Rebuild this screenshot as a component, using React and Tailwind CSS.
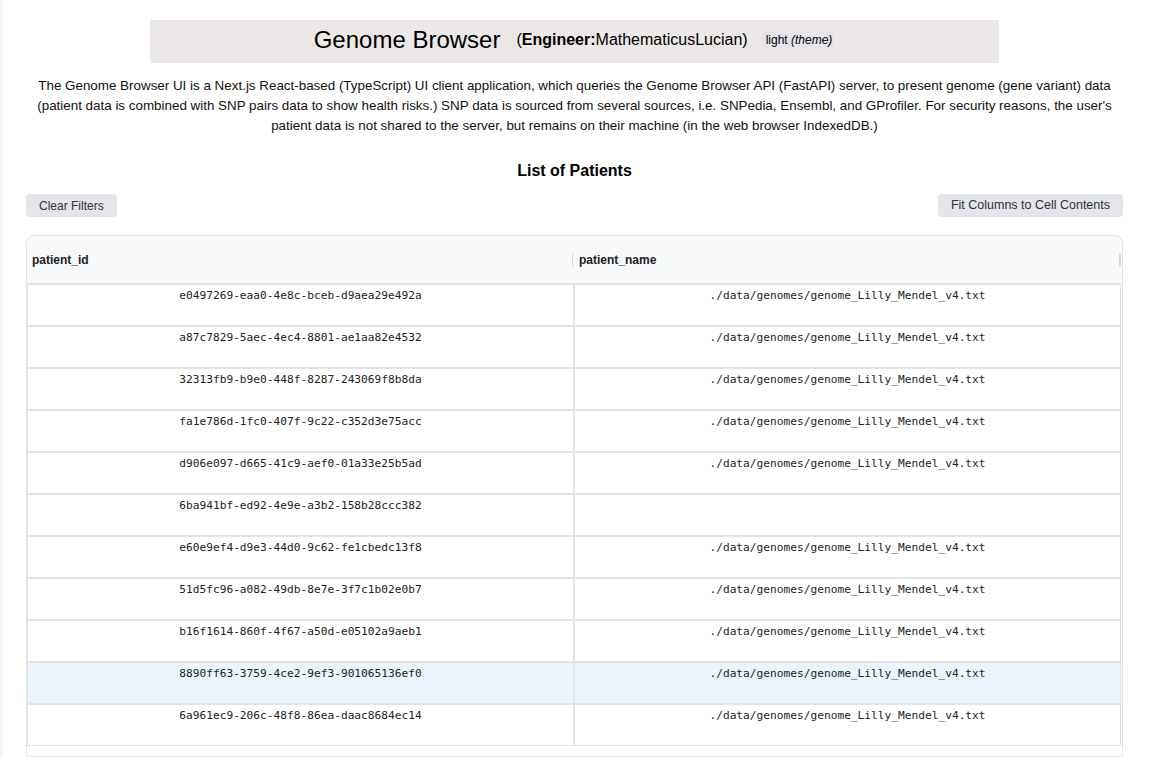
import React from "react";

const rows = [
  ["e0497269-eaa0-4e8c-bceb-d9aea29e492a", "./data/genomes/genome_Lilly_Mendel_v4.txt"],
  ["a87c7829-5aec-4ec4-8801-ae1aa82e4532", "./data/genomes/genome_Lilly_Mendel_v4.txt"],
  ["32313fb9-b9e0-448f-8287-243069f8b8da", "./data/genomes/genome_Lilly_Mendel_v4.txt"],
  ["fa1e786d-1fc0-407f-9c22-c352d3e75acc", "./data/genomes/genome_Lilly_Mendel_v4.txt"],
  ["d906e097-d665-41c9-aef0-01a33e25b5ad", "./data/genomes/genome_Lilly_Mendel_v4.txt"],
  ["6ba941bf-ed92-4e9e-a3b2-158b28ccc382", ""],
  ["e60e9ef4-d9e3-44d0-9c62-fe1cbedc13f8", "./data/genomes/genome_Lilly_Mendel_v4.txt"],
  ["51d5fc96-a082-49db-8e7e-3f7c1b02e0b7", "./data/genomes/genome_Lilly_Mendel_v4.txt"],
  ["b16f1614-860f-4f67-a50d-e05102a9aeb1", "./data/genomes/genome_Lilly_Mendel_v4.txt"],
  ["8890ff63-3759-4ce2-9ef3-901065136ef0", "./data/genomes/genome_Lilly_Mendel_v4.txt"],
  ["6a961ec9-206c-48f8-86ea-daac8684ec14", "./data/genomes/genome_Lilly_Mendel_v4.txt"],
];

export default function App() {
  return (
    <div className="flex h-[757px] overflow-hidden bg-white text-[#111] font-['Liberation_Sans',Arial,sans-serif]">
      <div className="w-[3px] shrink-0 bg-[#f4f4f5]" />
      <div className="flex-1 flex flex-col items-center pl-[23px] pr-[29px] pt-[20px]">
        <div className="w-[849px] h-[43px] bg-[#ece8e7] flex items-center justify-center pb-[4px]">
          <span className="text-[24px] text-black leading-none">Genome Browser</span>
          <span className="ml-[16px] text-[16px] text-black">
            (<b>Engineer:</b>MathematicusLucian)
          </span>
          <span className="ml-[15px] text-[12px] bg-[#e4e4ea] px-[3px] rounded-sm text-black">
            light <i>(theme)</i>
          </span>
        </div>
        <p className="mt-[13px] w-[1086px] text-[13.4px] leading-[20px] text-center text-[#111]">
          The Genome Browser UI is a Next.js React-based (TypeScript) UI client application, which queries the Genome Browser API (FastAPI) server, to present genome (gene variant) data (patient data is combined with SNP pairs data to show health risks.) SNP data is sourced from several sources, i.e. SNPedia, Ensembl, and GProfiler. For security reasons, the user's patient data is not shared to the server, but remains on their machine (in the web browser IndexedDB.)
        </p>
        <h2 className="mt-[25px] text-[16px] font-bold leading-[20px] text-black">List of Patients</h2>
        <div className="w-full flex justify-between mt-[13px]">
          <button className="h-[23px] px-[13px] rounded-[4px] bg-[#e4e5ea] text-[12px] text-[#333]">Clear Filters</button>
          <button className="h-[23px] px-[13px] rounded-[4px] bg-[#e4e5ea] text-[12.5px] text-[#333]">Fit Columns to Cell Contents</button>
        </div>
        <div className="w-full mt-[18px] border border-[#e2e2e7] rounded-t-[8px] bg-white flex-1">
          <div className="h-[48px] bg-[#f8f9fa] rounded-t-[8px] border-b border-[#e2e2e7] flex">
            <div className="w-[547px] flex items-center justify-between pl-[5px] text-[12px] font-semibold text-[#222]">
              <span>patient_id</span>
              <span className="w-[1px] h-[14px] bg-[#d6d6da] mr-[1px]" />
            </div>
            <div className="w-[547px] flex items-center justify-between pl-[5px] text-[12px] font-semibold text-[#222]">
              <span>patient_name</span>
              <span className="w-[2px] h-[14px] bg-[#d6d6da]" />
            </div>
          </div>
          <div className="font-['DejaVu_Sans_Mono',monospace] text-[11.2px] text-[#222]">
            {rows.map(([id, name], i) => (
              <div key={id} className={"flex h-[42px] " + (i === 9 ? "bg-[#ebf3fd]" : "")}>
                <div className="w-[547px] border border-[#e3e3e8] text-center leading-[22px]">{id}</div>
                <div className="w-[547px] border border-[#e3e3e8] text-center leading-[22px]">{name}</div>
              </div>
            ))}
          </div>
        </div>
      </div>
    </div>
  );
}
